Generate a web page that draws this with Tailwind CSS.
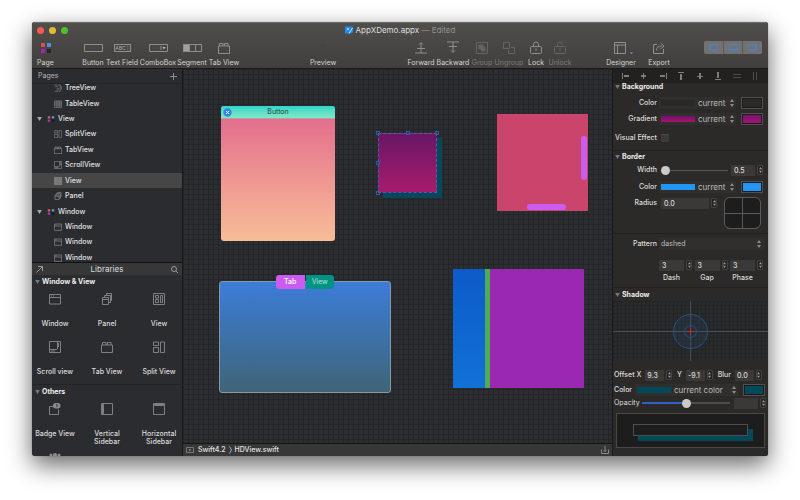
<!DOCTYPE html>
<html lang="en">
<head>
  <meta charset="UTF-8">
  <meta name="viewport" content="width=device-width, initial-scale=1.0">
  <title>AppXDemo.appx</title>
  <script src="https://cdn.jsdelivr.net/npm/@tailwindcss/browser@4"></script>
</head>
<body class="bg-white font-['Inter',sans-serif] text-[7px] leading-2 text-[#dcdcdc]">

  <!-- Shared icons -->
  <svg class="hidden">
    <symbol id="i-window" viewBox="0 0 12 12"><path d="M.5 1.5h11v9.500H.5zM.5 4.500h11M2 3h1M4 3h1" /></symbol>
    <symbol id="i-panel" viewBox="0 0 12 12"><path d="M1.500 4.500h6v7h-6zM1.500 6.500h6M3.500 4.500v-2h6v7h-2M5.500 2.500v-2h5v7h-1" /></symbol>
    <symbol id="i-view" viewBox="0 0 12 12"><path d="M.5.5h11v11H.5zM2.500 2.500h3v2.500h-3zM2.500 6.500h3v3h-3zM7.500 2.500h2v7h-2z" /></symbol>
    <symbol id="i-scroll" viewBox="0 0 12 12"><path d="M.5.5h11v11H.5zM8.500 1v7M1 8.500h7" /><path d="M9.500 2v4M2 10h4" /></symbol>
    <symbol id="i-tab" viewBox="0 0 12 12"><path d="M.5 4h11v7.500H.5zM1.500 4V1.500h3.500V4M6.500 4V1.500H10V4" /></symbol>
    <symbol id="i-split" viewBox="0 0 12 12"><path d="M.5 1h5v3.500h-5zM.5 6.500h5v5h-5zM7.500 1h4v10.500h-4z" /></symbol>
    <symbol id="i-table" viewBox="0 0 12 12"><path d="M.5 1.500h11v9.500H.5zM.5 4.500h11M.5 7.500h11M4.500 1.500v9.500M8 1.500v9.500" /></symbol>
    <symbol id="i-tree" viewBox="0 0 12 12"><path d="M0 1.500h5M2 4h4M4 6.500h4M4 9h4M1 11h5M6 1.500h3.500v9.500H7M10 4h1.500v4" /></symbol>
    <symbol id="i-group" viewBox="0 0 10 8"><path d="M1 .5h3v3H1z" fill="#e8584f" /><path d="M6 .5h3v3H6z" fill="#4a9bea" /><path d="M1 4.500h3v3H1z" fill="#b429d6" /><path d="M6 4.500h3v3H6z" fill="#1b1b1d" /></symbol>
    <symbol id="i-down" viewBox="0 0 6 5"><path d="M0 0h6L3 5z" fill="currentColor" /></symbol>
    <symbol id="i-updown" viewBox="0 0 4 8"><path d="M2 0l2 3H0zM2 8l2-3H0z" fill="currentColor" /></symbol>
  </svg>

  <div class="h-screen px-8 pt-[22px] pb-11">
    <div class="flex h-full flex-col overflow-hidden rounded-[3px] bg-[#2b2c2f] shadow-[0_0_1px_rgb(0_0_0/0.6),0_9px_24px_rgb(0_0_0/0.6)]">

      <!-- Title bar and toolbar -->
      <header class="h-[47px] shrink-0 border-t border-b border-t-[#6d6c6a] border-b-[#1b1b1b] bg-linear-to-b from-[#4f4e4b] to-[#403f3d]">
        <div class="relative flex h-[14px] items-center justify-center">
          <div class="absolute left-[5px] flex gap-1">
            <button aria-label="Close" class="size-[7px] rounded-full bg-[#f55b51]"></button>
            <button aria-label="Minimize" class="ml-px size-[7px] rounded-full bg-[#e3bb32]"></button>
            <button aria-label="Zoom" class="ml-px size-[7px] rounded-full bg-[#4fc02f]"></button>
          </div>
          <svg class="mr-[3px] size-2" viewBox="0 0 8 8"><path d="M0 .5h8v5.500L6 7.500H0z" fill="#1f8ff2" /><path d="M2 2h2v2H2z" fill="#8cc8ff" /><path d="M4 7.500L7.500 2" stroke="#d5d5d5" /></svg>
          <h1 class="text-[8px] text-[#dedede]">AppXDemo.appx <span class="text-[#93928f]">— Edited</span></h1>
        </div>
        <div class="flex h-8 text-[#d5d4d2]">
          <button class="flex w-[27px] flex-col items-center gap-px">
            <span class="flex h-[21px] items-center"><svg class="size-3" viewBox="0 0 12 12"><path d="M1 1h4v4H1z" fill="#d3524a" /><path d="M7 1h4v4H7z" fill="#4a8fd8" /><path d="M1 7h4v4H1z" fill="#a91fc4" /><path d="M7 7h4v4H7z" fill="#272727" /></svg></span>Page
          </button>
          <div class="grow-[21]"></div>
          <button class="flex w-[26px] flex-col items-center gap-px">
            <span class="flex h-[21px] items-center"><svg class="h-2 w-[19px]" viewBox="0 0 19 8" fill="none" stroke="#8f8e8b"><path d="M.5.5h18v7H.5z" /></svg></span>Button
          </button>
          <button class="flex w-8 flex-col items-center gap-px whitespace-nowrap">
            <span class="flex h-[21px] items-center"><span class="h-2 w-[17px] border border-[#8f8e8b] text-[5px] leading-[6px] text-[#aaa]">ABC |</span></span>Text Field
          </button>
          <button class="flex w-10 flex-col items-center gap-px">
            <span class="flex h-[21px] items-center"><svg class="h-2 w-[19px]" viewBox="0 0 19 8" fill="none" stroke="#8f8e8b"><path d="M.5.5h18v7H.5zM12 2v4" /><path d="M13.500 3h3L15 5.500z" fill="#bbb" stroke="none" /></svg></span>ComboBox
          </button>
          <button class="flex w-7 flex-col items-center gap-px">
            <span class="flex h-[21px] items-center"><svg class="h-2 w-[19px]" viewBox="0 0 19 8" fill="none" stroke="#8f8e8b"><path d="M.5.5h6v7h-6z" fill="#a09f9c" /><path d="M.5.5h18v7H.5zM12.500.5v7" /></svg></span>Segment
          </button>
          <button class="flex w-9 flex-col items-center gap-px whitespace-nowrap">
            <span class="flex h-[21px] items-center"><svg class="size-3" fill="none" stroke="#8f8e8b"><use href="#i-tab" /></svg></span>Tab View
          </button>
          <div class="grow-[68]"></div>
          <button class="flex w-[26px] flex-col items-center gap-px">
            <span class="flex h-[21px] items-center"><span class="size-2 rounded-full bg-[#454441]"></span></span>Preview
          </button>
          <div class="grow-[71]"></div>
          <button class="flex w-7 flex-col items-center gap-px">
            <span class="flex h-[21px] items-center"><svg class="h-[13px] w-3" viewBox="0 0 12 13" fill="none" stroke="#8f8e8b"><path d="M6 12V2M4 3.500L6 1.500l2 2M2 7.500h8M0 12h12" /></svg></span>Forward
          </button>
          <button class="flex w-9 flex-col items-center gap-px">
            <span class="flex h-[21px] items-center"><svg class="h-[13px] w-3" viewBox="0 0 12 13" fill="none" stroke="#8f8e8b"><path d="M6 1v10M4 9.500l2 2 2-2M2 5.500h8M0 1h12" /></svg></span>Backward
          </button>
          <button class="flex w-[22px] flex-col items-center gap-px text-[#7b7a77]" disabled>
            <span class="flex h-[21px] items-center"><svg class="size-3" viewBox="0 0 12 12" fill="none" stroke="#656461"><path d="M.5.5h11v11H.5z" /><path d="M3 3h4v4H3zM5.500 5.500H9V9H5.500z" fill="#656461" /></svg></span>Group
          </button>
          <button class="flex w-8 flex-col items-center gap-px text-[#7b7a77]" disabled>
            <span class="flex h-[21px] items-center"><svg class="size-3" viewBox="0 0 12 12" fill="none" stroke="#656461"><path d="M.5.5h6v6h-6zM8 5.500h3.500v6h-6V8" /></svg></span>Ungroup
          </button>
          <button class="flex w-[22px] flex-col items-center gap-px">
            <span class="flex h-[21px] items-center"><svg class="h-[13px] w-3" viewBox="0 0 12 13" fill="none" stroke="#8f8e8b"><rect x=".5" y="5.500" width="11" height="7" rx="1" /><path d="M3.500 5.500V3.500a2.500 2.500 0 015 0v2M6 7.500v2.500" /></svg></span>Lock
          </button>
          <button class="flex w-[26px] flex-col items-center gap-px text-[#7b7a77]" disabled>
            <span class="flex h-[21px] items-center"><svg class="h-[13px] w-3" viewBox="0 0 12 13" fill="none" stroke="#656461"><rect x=".5" y="5.500" width="11" height="7" rx="1" /><path d="M3.500 5.500V3.500a2.500 2.500 0 015 0M6 7.500v2.500" /></svg></span>Unlock
          </button>
          <div class="grow-[33]"></div>
          <button class="flex w-[30px] flex-col items-center gap-px">
            <span class="flex h-[21px] items-center pl-1"><svg class="h-3 w-[19px]" viewBox="0 0 19 12" fill="none" stroke="#8f8e8b"><path d="M.5.5h11v11H.5zM.5 3h11M3.500 3v8.500" /><path d="M16 10.500h3L17.500 12z" fill="#a09f9c" stroke="none" /></svg></span>Designer
          </button>
          <button class="ml-[11px] flex w-6 flex-col items-center gap-px">
            <span class="flex h-[21px] items-center"><svg class="size-3" viewBox="0 0 12 12" fill="none" stroke="#8f8e8b"><path d="M4 2.500H.5v9h10V7M3.500 8.500c0-3 1.500-4.500 5-4.500M7.500 1L11 4 7.500 7" /></svg></span>Export
          </button>
          <div class="grow-[33]"></div>
          <div class="mt-1 mr-1.5 flex h-[13px] w-[58px] gap-px overflow-hidden rounded-xs bg-[#5a5957]">
            <button aria-label="Toggle left panel" class="flex flex-1 items-center justify-center bg-[#737270]"><svg class="h-[7px] w-[9px]" viewBox="0 0 9 7" fill="none" stroke="#4583c6"><path d="M.5.5h8v6h-8zM1.500 .5v6" /></svg></button>
            <button aria-label="Toggle bottom panel" class="flex flex-1 items-center justify-center bg-[#737270]"><svg class="h-[7px] w-[9px]" viewBox="0 0 9 7" fill="none" stroke="#4583c6"><path d="M.5.5h8v6h-8zM.5 5.500h8" /></svg></button>
            <button aria-label="Toggle right panel" class="flex flex-1 items-center justify-center bg-[#737270]"><svg class="h-[7px] w-[9px]" viewBox="0 0 9 7" fill="none" stroke="#4583c6"><path d="M.5.5h8v6h-8zM7.500 .5v6" /></svg></button>
          </div>
        </div>
      </header>

      <div class="flex min-h-0 flex-1">

        <!-- Left sidebar -->
        <aside class="flex w-[151px] shrink-0 flex-col border-r border-[#18181a]">
          <div class="flex h-[15px] shrink-0 items-center justify-between border-b border-[#232427] pr-[5px] pl-1.5 text-[#b5b5b7]">
            <h2>Pages</h2>
            <button aria-label="Add page"><svg class="size-[7px]" viewBox="0 0 7 7" stroke="#8e8e90"><path d="M3.500 0v7M0 3.500h7" /></svg></button>
          </div>
          <nav class="flex min-h-0 flex-1 flex-col justify-center overflow-hidden">
            <ul class="grid h-[185px] shrink-0 auto-rows-fr font-medium text-[#e0e0e1]">
              <li class="flex items-center gap-[3px] pl-[22px]"><svg class="size-2" fill="none" stroke="#808083"><use href="#i-tree" /></svg>TreeView</li>
              <li class="flex items-center gap-[3px] pl-[22px]"><svg class="size-2" fill="none" stroke="#909093"><use href="#i-table" /></svg>TableView</li>
              <li class="flex items-center gap-[3px] pl-[5px]"><svg class="mr-0.5 h-1 w-[5px] text-[#a5a5a7]"><use href="#i-down" /></svg><svg class="h-2 w-2"><use href="#i-group" /></svg>View</li>
              <li class="flex items-center gap-[3px] pl-[22px]"><svg class="size-2" fill="none" stroke="#808083"><use href="#i-split" /></svg>SplitView</li>
              <li class="flex items-center gap-[3px] pl-[22px]"><svg class="size-2" fill="none" stroke="#909093"><use href="#i-tab" /></svg>TabView</li>
              <li class="flex items-center gap-[3px] pl-[22px]"><svg class="size-2" fill="none" stroke="#909093"><use href="#i-scroll" /></svg>ScrollView</li>
              <li class="flex items-center gap-[3px] bg-[#464646] pl-[22px]"><svg class="size-2 bg-[#6a6a6a]" fill="none" stroke="#8a8a8a"><use href="#i-view" /></svg>View</li>
              <li class="flex items-center gap-[3px] pl-[22px]"><svg class="size-2" fill="none" stroke="#909093"><use href="#i-panel" /></svg>Panel</li>
              <li class="flex items-center gap-[3px] pl-[5px]"><svg class="mr-0.5 h-1 w-[5px] text-[#a5a5a7]"><use href="#i-down" /></svg><svg class="h-2 w-2"><use href="#i-group" /></svg>Window</li>
              <li class="flex items-center gap-[3px] pl-[22px]"><svg class="size-2" fill="none" stroke="#909093"><use href="#i-window" /></svg>Window</li>
              <li class="flex items-center gap-[3px] pl-[22px]"><svg class="size-2" fill="none" stroke="#909093"><use href="#i-window" /></svg>Window</li>
              <li class="flex items-center gap-[3px] pl-[22px]"><svg class="size-2" fill="none" stroke="#909093"><use href="#i-window" /></svg>Window</li>
            </ul>
          </nav>

          <section class="h-[194px] shrink-0 overflow-hidden font-medium">
            <div class="flex h-[13px] items-center justify-between border-t border-[#111] bg-[#373737] px-1 text-[8px] font-normal">
              <button aria-label="Detach"><svg class="size-[7px]" viewBox="0 0 7 7" fill="none" stroke="#999"><path d="M.5 6.500l6-6M2 .5h4.500V5" /></svg></button>
              <h2>Libraries</h2>
              <button aria-label="Search"><svg class="size-[7px]" viewBox="0 0 7 7" fill="none" stroke="#999"><circle cx="3" cy="3" r="2.500" /><path d="M5 5l2 2" /></svg></button>
            </div>
            <h3 class="flex h-[13px] items-center gap-0.5 pl-[3px] font-bold text-[#ececec]"><svg class="h-1 w-[5px] text-[#777]"><use href="#i-down" /></svg>Window &amp; View</h3>
            <div class="flex justify-between px-1 text-center">
              <div class="flex h-12 w-[38px] flex-col items-center gap-[15px] whitespace-nowrap pt-[5px]"><svg class="size-3 shrink-0" fill="none" stroke="#808083"><use href="#i-window" /></svg>Window</div>
              <div class="flex h-12 w-[38px] flex-col items-center gap-[15px] whitespace-nowrap pt-[5px]"><svg class="size-3 shrink-0" fill="none" stroke="#808083"><use href="#i-panel" /></svg>Panel</div>
              <div class="flex h-12 w-[38px] flex-col items-center gap-[15px] whitespace-nowrap pt-[5px]"><svg class="size-3 shrink-0" fill="none" stroke="#808083"><use href="#i-view" /></svg>View</div>
            </div>
            <div class="flex justify-between border-b border-[#222326] px-1 text-center">
              <div class="flex h-12 w-[38px] flex-col items-center gap-[15px] whitespace-nowrap pt-[5px]"><svg class="size-3 shrink-0" fill="none" stroke="#808083"><use href="#i-scroll" /></svg>Scroll view</div>
              <div class="flex h-12 w-[38px] flex-col items-center gap-[15px] whitespace-nowrap pt-[5px]"><svg class="size-3 shrink-0" fill="none" stroke="#808083"><use href="#i-tab" /></svg>Tab View</div>
              <div class="flex h-12 w-[38px] flex-col items-center gap-[15px] whitespace-nowrap pt-[5px]"><svg class="size-3 shrink-0" fill="none" stroke="#808083"><use href="#i-split" /></svg>Split View</div>
            </div>
            <h3 class="flex h-[13px] items-center gap-0.5 pl-[3px] font-bold text-[#ececec]"><svg class="h-1 w-[5px] text-[#777]"><use href="#i-down" /></svg>Others</h3>
            <div class="flex justify-between px-1 text-center">
              <div class="flex h-12 w-[38px] flex-col items-center gap-[15px] whitespace-nowrap pt-[5px]"><svg class="size-3 shrink-0" viewBox="0 0 12 12" fill="none" stroke="#808083"><path d="M4 3.500H.5v8h9V6.500" /><rect x="4" y="0" width="7.500" height="5.500" rx="2.700" fill="#8b8b8e" stroke="none" /><path d="M7.500 1.500h.5v2.500" stroke="#2b2c2f" /></svg>Badge View</div>
              <div class="flex h-12 w-[38px] flex-col items-center gap-[15px] pt-[5px]"><svg class="size-3 shrink-0" viewBox="0 0 12 12" fill="none" stroke="#808083"><path d="M.5.5h11v11H.5z" /><path d="M1.500 1.500h1v9h-1z" fill="#8b8b8e" /></svg>Vertical Sidebar</div>
              <div class="flex h-12 w-[38px] flex-col items-center gap-[15px] pt-[5px]"><svg class="size-3 shrink-0" viewBox="0 0 12 12" fill="none" stroke="#808083"><path d="M.5.5h11v11H.5z" /><path d="M1.500 1.500h9v1h-9z" fill="#8b8b8e" /></svg>Horizontal Sidebar</div>
            </div>
            <div class="flex px-1">
              <div class="flex w-[38px] justify-center pt-[7px]"><svg class="size-3" viewBox="0 0 12 12" fill="#8b8b8e"><circle cx="2" cy="2" r="1.500" /><circle cx="6" cy="2" r="2" /><circle cx="10" cy="2" r="1.500" /><path d="M0 5h12v6H0z" /></svg></div>
            </div>
          </section>
        </aside>

        <!-- Design canvas -->
        <main class="flex min-w-0 flex-1 flex-col">
          <div class="relative flex-1 overflow-hidden bg-[#2c2d30] bg-[linear-gradient(#242528_1px,transparent_1px),linear-gradient(90deg,#242528_1px,transparent_1px)] bg-[size:5px_5px]">

            <div class="absolute top-[37px] left-[38px] h-[135px] w-[114px] overflow-hidden rounded-[3px] bg-linear-to-b from-[#e0658b] to-[#f7bd97]">
              <div class="relative flex h-[13px] items-center justify-center border-b border-[#b8a0a0] bg-linear-to-b from-[#2bd6cb] to-[#7fe9c2] text-[#22403f]">
                <svg class="absolute top-0.5 left-0.5 size-[9px]" viewBox="0 0 9 9"><circle cx="4.500" cy="4.500" r="4.200" fill="#3388ee" /><path d="M3 3l3 3M6 3L3 6" stroke="#fff" /></svg>
                Button
              </div>
            </div>

            <div class="absolute top-16 left-[195px] h-[60px] w-[59px] border border-dashed border-[#3a66b8] bg-linear-to-b from-[#6a1565] to-[#a81a6b] shadow-[5px_5px_#04495a]">
              <span class="absolute -top-[3px] -left-[3px] size-1 border border-[#2a5cab]"></span>
              <span class="absolute -top-[3px] left-[27px] size-1 border border-[#2a5cab]"></span>
              <span class="absolute -top-[3px] -right-[3px] size-1 border border-[#2a5cab]"></span>
              <span class="absolute top-[27px] -left-[3px] size-1 border border-[#2a5cab]"></span>
              <span class="absolute -bottom-[3px] -left-[3px] size-1 border border-[#2a5cab]"></span>
            </div>

            <div class="absolute top-[45px] left-[314px] h-[97px] w-[91px] bg-[#ca446c]">
              <div class="absolute top-[22px] right-px h-11 w-1.5 rounded-full bg-[#cc5ced]"></div>
              <div class="absolute bottom-px left-[30px] h-1.5 w-[39px] rounded-full bg-[#cc5ced]"></div>
            </div>

            <div class="absolute top-[212px] left-9 h-[112px] w-[172px] rounded-[3px] border border-[#8799a5] bg-linear-to-b from-[#3d7cda] to-[#3e6477]"></div>
            <div class="absolute top-[206px] left-[93px] flex h-[14px] w-[58px] gap-px overflow-hidden rounded-[3px]">
              <button class="flex-1 bg-[#cc5cf0] font-medium text-white">Tab</button>
              <button class="flex-1 bg-[#019384] text-[#b9e2dc]">View</button>
            </div>

            <div class="absolute top-[200px] left-[270px] flex h-[119px] w-[131px] bg-[#9a28b0]">
              <div class="w-8 bg-linear-to-b from-[#0d5bc8] to-[#1271d6]"></div>
              <div class="w-[5px] bg-[#4cae50]"></div>
            </div>
          </div>

          <footer class="flex h-[13px] shrink-0 items-center border-t border-[#151515] bg-[#373737] px-[3px] font-medium text-[#e4e4e4]">
            <svg class="h-1.5 w-2" viewBox="0 0 8 6" fill="none" stroke="#777"><path d="M.5.5h7v5h-7z" /><path d="M3 2l2.500 1L3 4z" fill="#999" stroke="none" /></svg>
            <span class="ml-1">Swift4.2</span>
            <svg class="mx-[3px] h-2 w-[3px]" viewBox="0 0 3 8" fill="none" stroke="#aaa"><path d="M.5.5L2.500 4l-2 3.500" /></svg>
            <span>HDView.swift</span>
            <button aria-label="Download" class="ml-auto"><svg class="size-2" viewBox="0 0 8 8" fill="none" stroke="#8b8b8b"><path d="M.5 3.500v4h7v-4M4 0v5.500M2.500 4L4 5.500 5.500 4" /></svg></button>
          </footer>
        </main>

        <!-- Inspector -->
        <aside class="flex w-[156px] shrink-0 flex-col overflow-hidden border-l border-[#1a1918] bg-[#2c2a28] font-medium">
          <div class="flex h-[14px] shrink-0 items-center justify-between bg-[#222120] px-[9px] text-[#7d7d7b]">
            <button aria-label="Align left"><svg class="size-2" viewBox="0 0 8 8" fill="currentColor"><path d="M0 1h1v6H0zM2 3h5v2H2z" /></svg></button>
            <button aria-label="Align center"><svg class="size-2" viewBox="0 0 8 8" fill="currentColor"><path d="M3 1h1v6H3zM1 3h5v2H1z" /></svg></button>
            <button aria-label="Align right"><svg class="size-2" viewBox="0 0 8 8" fill="currentColor"><path d="M7 1h1v6H7zM1 3h5v2H1z" /></svg></button>
            <button aria-label="Align top"><svg class="size-2" viewBox="0 0 8 8" fill="currentColor"><path d="M1 0h6v1H1zM3 2h2v6H3z" /></svg></button>
            <button aria-label="Align middle"><svg class="size-2" viewBox="0 0 8 8" fill="currentColor"><path d="M1 4h6v1H1zM3 1h2v6H3z" /></svg></button>
            <button aria-label="Align bottom"><svg class="size-2" viewBox="0 0 8 8" fill="currentColor"><path d="M1 7h6v1H1zM3 0h2v6H3z" /></svg></button>
            <button aria-label="Same height"><svg class="size-2" viewBox="0 0 8 8" fill="#4c4c4a"><path d="M0 2h8v1H0zM0 5h8v1H0z" /></svg></button>
            <button aria-label="Same width"><svg class="size-2" viewBox="0 0 8 8" fill="#4c4c4a"><path d="M2 0h1v8H2zM5 0h1v8H5z" /></svg></button>
          </div>

          <section class="border-b border-[#232120] pb-1">
            <h3 class="mb-1 flex h-2 items-center gap-0.5 pl-0.5 font-bold text-[#ececec]"><svg class="h-1 w-[5px] text-[#777]"><use href="#i-down" /></svg>Background</h3>
            <div class="flex h-4 items-center pr-[5px]">
              <label for="bg-color" class="w-11 text-right">Color</label>
              <div class="ml-0.5 flex h-3 flex-1 items-center bg-[#302f2d] pr-0.5 pl-0.5">
                <span class="h-1.5 w-[34px] bg-[#29292a]"></span>
                <select id="bg-color" class="ml-[3px] min-w-0 flex-1 appearance-none text-[8px] leading-3 font-normal text-[#bdbcba]"><option>current</option></select>
                <svg class="h-2 w-1 text-[#8a8a88]"><use href="#i-updown" /></svg>
              </div>
              <button aria-label="Pick color" class="ml-[5px] h-3 w-[22px] border border-[#505050] bg-[#2a2a2b] shadow-[inset_0_0_0_1px_#1c1c1c]"></button>
            </div>
            <div class="flex h-4 items-center pr-[5px]">
              <label for="bg-gradient" class="w-11 text-right">Gradient</label>
              <div class="ml-0.5 flex h-3 flex-1 items-center bg-[#302f2d] pr-0.5 pl-0.5">
                <span class="h-1.5 w-[34px] bg-linear-to-b from-[#6d1268] to-[#a4156f]"></span>
                <select id="bg-gradient" class="ml-[3px] min-w-0 flex-1 appearance-none text-[8px] leading-3 font-normal text-[#bdbcba]"><option>current</option></select>
                <svg class="h-2 w-1 text-[#8a8a88]"><use href="#i-updown" /></svg>
              </div>
              <button aria-label="Pick gradient" class="ml-[5px] h-3 w-[22px] border border-[#505050] bg-linear-to-b from-[#7a1169] to-[#a4156f] shadow-[inset_0_0_0_1px_#1c1c1c]"></button>
            </div>
            <div class="mt-[3px] flex h-4 items-center pr-[5px]">
              <label for="visual-effect" class="w-11 whitespace-nowrap text-right">Visual Effect</label>
              <input id="visual-effect" type="checkbox" class="ml-1 size-2 appearance-none rounded-[1px] border-t border-[#4d4b49] bg-[#3c3a38]">
            </div>
          </section>

          <section class="border-b border-[#232120]">
            <h3 class="flex h-[11px] items-center gap-0.5 pl-0.5 font-bold text-[#ececec]"><svg class="h-1 w-[5px] text-[#777]"><use href="#i-down" /></svg>Border</h3>
            <div class="flex h-4 items-center pr-[5px]">
              <label for="border-width" class="w-11 text-right">Width</label>
              <input id="border-width" type="range" value="0" class="ml-1 h-px min-w-0 flex-1 appearance-none bg-[#5b5a58] [&::-webkit-slider-thumb]:size-[9px] [&::-webkit-slider-thumb]:appearance-none [&::-webkit-slider-thumb]:rounded-full [&::-webkit-slider-thumb]:bg-[#cbcac8]">
              <input aria-label="Width value" value="0.5" class="ml-[3px] h-[11px] w-6 bg-[#3b3937] pl-[3px]">
              <button aria-label="Step width" class="ml-0.5 flex h-2.5 w-1.5 items-center justify-center rounded-[1px] border border-[#44423f] bg-[#242322] text-[#999]"><svg class="h-1.5 w-[3px]"><use href="#i-updown" /></svg></button>
            </div>
            <div class="mt-px flex h-4 items-center pr-[5px]">
              <label for="border-color" class="w-11 text-right">Color</label>
              <div class="ml-0.5 flex h-3 flex-1 items-center bg-[#302f2d] pr-0.5 pl-0.5">
                <span class="h-1.5 w-[34px] bg-[#2196f3]"></span>
                <select id="border-color" class="ml-[3px] min-w-0 flex-1 appearance-none text-[8px] leading-3 font-normal text-[#bdbcba]"><option>current</option></select>
                <svg class="h-2 w-1 text-[#8a8a88]"><use href="#i-updown" /></svg>
              </div>
              <button aria-label="Pick border color" class="ml-[5px] h-3 w-[22px] border border-[#505050] bg-[#2196f3] shadow-[inset_0_0_0_1px_#1c1c1c]"></button>
            </div>
            <div class="flex h-[39px] items-start border-b border-[#232120] pr-[7px]">
              <label for="radius" class="w-11 text-right leading-4">Radius</label>
              <input id="radius" value="0.0" class="mt-[3px] ml-1 h-[11px] min-w-0 flex-1 bg-[#3b3937] pl-[3px]">
              <button aria-label="Step radius" class="mt-[3px] ml-0.5 flex h-2.5 w-1.5 items-center justify-center rounded-[1px] border border-[#44423f] bg-[#242322] text-[#999]"><svg class="h-1.5 w-[3px]"><use href="#i-updown" /></svg></button>
              <div class="mt-0.5 ml-[7px] grid h-8 w-[37px] grid-cols-2 gap-px overflow-hidden rounded-md border border-[#5b5a58] bg-[#5b5a58]">
                <span class="bg-[#1d1d1d]"></span><span class="bg-[#1d1d1d]"></span><span class="bg-[#1d1d1d]"></span><span class="bg-[#1d1d1d]"></span>
              </div>
            </div>
            <div class="mt-0.5 flex h-4 items-center pr-1">
              <label for="pattern" class="w-11 text-right">Pattern</label>
              <div class="ml-0.5 flex h-3 flex-1 items-center bg-[#302f2d] pr-[3px]">
                <select id="pattern" class="ml-0.5 flex-1 appearance-none leading-3 font-normal text-[#bdbcba]"><option>dashed</option></select>
                <svg class="h-2 w-1 text-[#8a8a88]"><use href="#i-updown" /></svg>
              </div>
            </div>
            <div class="mt-2 flex justify-between pr-[5px] pb-[5px] pl-[46px]">
              <div class="grid grid-cols-[25px_6px] gap-x-0.5 text-center">
                <input id="dash" value="3" class="h-[11px] w-full bg-[#3b3937] pl-[3px]">
                <button aria-label="Step dash" class="flex h-2.5 w-1.5 items-center justify-center rounded-[1px] border border-[#44423f] bg-[#242322] text-[#999]"><svg class="h-1.5 w-[3px]"><use href="#i-updown" /></svg></button>
                <label for="dash" class="mt-[3px]">Dash</label>
              </div>
              <div class="grid grid-cols-[25px_6px] gap-x-0.5 text-center">
                <input id="gap" value="3" class="h-[11px] w-full bg-[#3b3937] pl-[3px]">
                <button aria-label="Step gap" class="flex h-2.5 w-1.5 items-center justify-center rounded-[1px] border border-[#44423f] bg-[#242322] text-[#999]"><svg class="h-1.5 w-[3px]"><use href="#i-updown" /></svg></button>
                <label for="gap" class="mt-[3px]">Gap</label>
              </div>
              <div class="grid grid-cols-[25px_6px] gap-x-0.5 text-center">
                <input id="phase" value="3" class="h-[11px] w-full bg-[#3b3937] pl-[3px]">
                <button aria-label="Step phase" class="flex h-2.5 w-1.5 items-center justify-center rounded-[1px] border border-[#44423f] bg-[#242322] text-[#999]"><svg class="h-1.5 w-[3px]"><use href="#i-updown" /></svg></button>
                <label for="phase" class="mt-[3px]">Phase</label>
              </div>
            </div>
          </section>

          <section>
            <h3 class="flex h-[13px] items-center gap-0.5 pl-0.5 font-bold text-[#ececec]"><svg class="h-1 w-[5px] text-[#777]"><use href="#i-down" /></svg>Shadow</h3>
            <div class="flex h-[60px] items-center justify-center bg-[#2a2b2d] bg-[linear-gradient(#232426_1px,transparent_1px),linear-gradient(90deg,#232426_1px,transparent_1px)] bg-[size:4px_4px]">
              <svg class="h-full w-full" viewBox="0 0 155 60" fill="none" preserveAspectRatio="xMidYMid slice">
                <path d="M0 30.500h155M77.500 0v60" stroke="#4d4d4e" />
                <circle cx="77.500" cy="30.500" r="17" stroke="#25527f" fill="#2a5a8c" fill-opacity=".15" />
                <circle cx="77.500" cy="30.500" r="6" stroke="#25527f" />
                <path d="M74.500 30.500h6M77.500 27.500v6" stroke="#e02020" />
              </svg>
            </div>
            <div class="mt-1.5 flex h-4 items-center justify-between pr-1.5 pl-px">
              <div class="flex items-center">
                <label for="offset-x" class="mr-1 whitespace-nowrap">Offset X</label>
                <input id="offset-x" value="9.3" class="h-[11px] w-[19px] bg-[#3b3937] pl-0.5">
                <button aria-label="Step offset x" class="ml-0.5 flex h-2.5 w-1.5 items-center justify-center rounded-[1px] border border-[#44423f] bg-[#242322] text-[#999]"><svg class="h-1.5 w-[3px]"><use href="#i-updown" /></svg></button>
              </div>
              <div class="flex items-center">
                <label for="offset-y" class="mr-1">Y</label>
                <input id="offset-y" value="-9.1" class="h-[11px] w-[19px] bg-[#3b3937] pl-0.5">
                <button aria-label="Step offset y" class="ml-0.5 flex h-2.5 w-1.5 items-center justify-center rounded-[1px] border border-[#44423f] bg-[#242322] text-[#999]"><svg class="h-1.5 w-[3px]"><use href="#i-updown" /></svg></button>
              </div>
              <div class="flex items-center">
                <label for="blur" class="mr-1">Blur</label>
                <input id="blur" value="0.0" class="h-[11px] w-[19px] bg-[#3b3937] pl-0.5">
                <button aria-label="Step blur" class="ml-0.5 flex h-2.5 w-1.5 items-center justify-center rounded-[1px] border border-[#44423f] bg-[#242322] text-[#999]"><svg class="h-1.5 w-[3px]"><use href="#i-updown" /></svg></button>
              </div>
            </div>
            <div class="flex h-[14px] items-center pr-[3px] pl-px">
              <label for="shadow-color" class="w-[21px]">Color</label>
              <div class="flex h-3 flex-1 items-center bg-[#302f2d] pr-0.5 pl-0.5">
                <span class="h-1.5 w-[34px] bg-[#04495a]"></span>
                <select id="shadow-color" class="ml-[3px] min-w-0 flex-1 appearance-none text-[8px] leading-3 font-normal text-[#bdbcba]"><option>current color</option></select>
                <svg class="h-2 w-1 text-[#8a8a88]"><use href="#i-updown" /></svg>
              </div>
              <button aria-label="Pick shadow color" class="ml-[5px] h-3 w-[22px] border border-[#505050] bg-[#04495a] shadow-[inset_0_0_0_1px_#1c1c1c]"></button>
            </div>
            <div class="flex h-3 items-center pr-0.5 pl-px">
              <label for="opacity" class="w-7 font-normal">Opacity</label>
              <input id="opacity" type="range" value="50" class="h-0.5 min-w-0 flex-1 appearance-none bg-linear-to-r from-[#2f62c4] from-50% to-[#4d4c4a] to-50% [&::-webkit-slider-thumb]:size-[9px] [&::-webkit-slider-thumb]:appearance-none [&::-webkit-slider-thumb]:rounded-full [&::-webkit-slider-thumb]:bg-[#cbcac8]">
              <input aria-label="Opacity value" class="ml-1 h-[11px] w-6 bg-[#3b3937]">
              <button aria-label="Step opacity" class="ml-0.5 flex h-2.5 w-1.5 items-center justify-center rounded-[1px] border border-[#44423f] bg-[#242322] text-[#999]"><svg class="h-1.5 w-[3px]"><use href="#i-updown" /></svg></button>
            </div>
            <div class="mx-[3px] mt-1 flex h-[35px] items-center border border-[#4a4846] bg-[#1d1d1d] px-4">
              <div class="mb-0.5 h-3 flex-1 border border-[#4e4e4e] bg-[#1d1d1d] shadow-[5px_5px_#04495a]"></div>
            </div>
          </section>
        </aside>
      </div>
    </div>
  </div>
</body>
</html>
